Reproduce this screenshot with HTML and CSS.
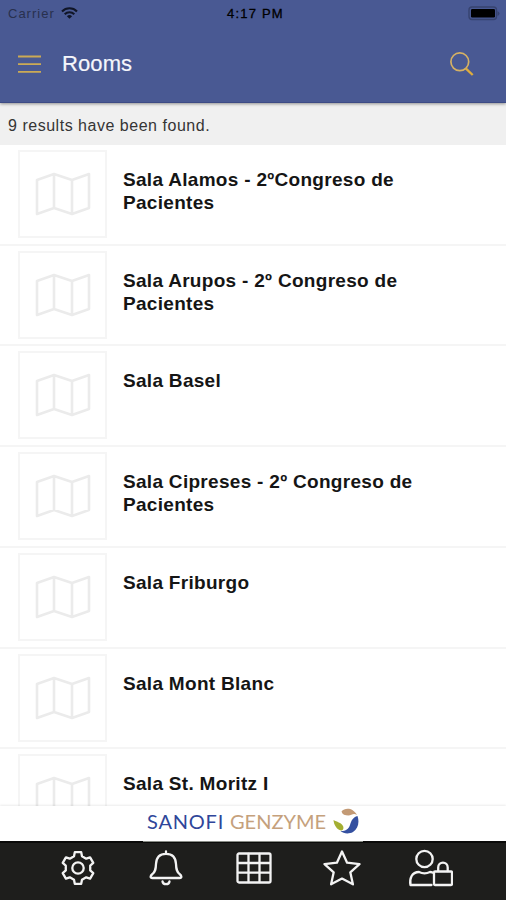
FILE: index.html
```html
<!DOCTYPE html>
<html lang="en">
<head>
<meta charset="utf-8">
<title>Rooms</title>
<link rel="stylesheet" href="styles.css">
</head>
<body>
<svg class="defs" aria-hidden="true">
  <symbol id="map" viewBox="0 0 56 44">
    <path d="M2 8 L19 2 L37 8 L54 2 V36 L37 42 L19 36 L2 42 Z M19 2 V36 M37 8 V42" fill="none" stroke="currentColor" stroke-width="2.6" stroke-linejoin="round"/>
  </symbol>
</svg>
<div class="app">
  <header class="header">
    <div class="status">
      <div class="carrier"><span>Carrier</span>
        <svg width="17" height="12" viewBox="0 0 17 12" fill="none" stroke="#101527" stroke-width="2.1"><path d="M1 4.400a10.600 10.600 0 0 1 15 0M3.700 7.200a6.800 6.800 0 0 1 9.600 0"/><path d="M8.500 11.800 5.900 9.200a3.700 3.700 0 0 1 5.200 0z" fill="#101527" stroke="none"/></svg>
      </div>
      <div class="time">4:17 PM</div>
      <svg class="battery" width="32" height="15" viewBox="0 0 32 15"><rect x="1" y="1" width="27.500" height="12.500" rx="3" fill="none" stroke="#37436f" stroke-width="1.4"/><rect x="3" y="3" width="24" height="8.500" rx="1.2" fill="#000"/><path d="M29.500 5v5q2-1 2-2.500T29.500 5" fill="#37436f"/></svg>
    </div>
    <div class="toolbar">
      <svg class="menu" width="23" height="19" viewBox="0 0 23 19" stroke="#cbaa55" stroke-width="1.9"><path d="M0 1.500H23M0 9.100H23M0 16.900H23"/></svg>
      <h1>Rooms</h1>
      <svg class="search" width="24" height="24" viewBox="0 0 24 24" fill="none" stroke="#d5b164"><circle cx="9.800" cy="9.800" r="8.900" stroke-width="1.7"/><path d="m15.700 16.300 7 6.700" stroke="#dfad3e" stroke-width="2.300"/></svg>
    </div>
  </header>
  <div class="results"><span>9 results have been found.</span></div>
  <main class="list">
    <div class="row"><div class="thumb"><svg><use href="#map"/></svg></div><p>Sala Alamos - 2ºCongreso de<br>Pacientes</p></div>
    <div class="row"><div class="thumb"><svg><use href="#map"/></svg></div><p>Sala Arupos - 2º Congreso de<br>Pacientes</p></div>
    <div class="row"><div class="thumb"><svg><use href="#map"/></svg></div><p>Sala Basel</p></div>
    <div class="row"><div class="thumb"><svg><use href="#map"/></svg></div><p>Sala Cipreses - 2º Congreso de<br>Pacientes</p></div>
    <div class="row"><div class="thumb"><svg><use href="#map"/></svg></div><p>Sala Friburgo</p></div>
    <div class="row"><div class="thumb"><svg><use href="#map"/></svg></div><p>Sala Mont Blanc</p></div>
    <div class="row"><div class="thumb"><svg><use href="#map"/></svg></div><p>Sala St. Moritz I</p></div>
  </main>
  <div class="brand">
    <span class="sanofi">SANOFI</span><span class="genzyme">GENZYME</span>
    <svg width="26" height="26" viewBox="0 0 26 26">
      <path d="M8.500 3.500C12-.8 20-.5 24 7c-3.500-2.300-5.500.2-8.500.5C12 7.500 9.300 6.500 8.500 3.500Z" fill="#c39a75"/>
      <path d="M24.500 8c2.200 6.500.5 13-4.500 16-4.500 2.400-9.500 1.600-12.500-1 5 .2 8-1.500 9.500-6C18.500 12 20 9.500 24.500 8Z" fill="#3450a0"/>
      <path d="M.5 12c3.500 2 7.500 2.500 9.500 6 1 2.200.3 4.500-2 4.500C4 21.800.8 17 .5 12Z" fill="#a4af32"/>
    </svg>
  </div>
  <nav class="tabs">
    <svg width="34" height="34" viewBox="-17 -17 34 34"><path d="M-3.200-15.800H3.200L4-11.800 8.220-9.360 12.080-10.670 15.280-5.130 12.220-2.440V2.440L15.280 5.130 12.080 10.670 8.220 9.360 4 11.800 3.200 15.800H-3.200L-4 11.800-8.220 9.360-12.080 10.670-15.280 5.130-12.220 2.440V-2.440L-15.280-5.130-12.080-10.670-8.220-9.360-4-11.800Z"/><circle r="5.700"/></svg>
    <svg width="34" height="36" viewBox="0 0 34 36"><path d="M17 1.500v2M3.500 28c-2.500 0-2.500-2 0-4 3-2.700 3.300-5 3.500-10C7.300 7.500 11 3.800 17 3.800S26.700 7.500 27 14c.2 5 .5 7.300 3.500 10 2.500 2 2.500 4 0 4ZM13.500 31.500c.5 3.500 6.500 3.500 7 0"/></svg>
    <svg width="36" height="32" viewBox="0 0 36 32"><rect x="1.500" y="1.500" width="33" height="29" rx="1.500"/><path d="M2 11h32M2 20.700h32M12.500 2v28M23.500 2v28"/></svg>
    <svg width="38" height="36" viewBox="0 0 38 36"><path d="m19 1.500 5.100 11.200 12.400 1.400-9.200 8.200 2.600 12L19 28.600 8.100 34.300l2.600-12-9.200-8.200 12.400-1.400Z"/></svg>
    <svg width="46" height="38" viewBox="0 0 46 38"><circle cx="17.500" cy="10" r="8.200"/><path d="M24.500 36H3.500c-1.200-6 1-13 8.500-13 3.500 1.700 7.500 1.700 11 0 1 0 1.800.2 2.500.6"/><rect x="27" y="22.500" width="18" height="13.500" rx="1"/><path d="M31.200 22v-3.500c0-6.500 9.500-6.500 9.500 0V22"/></svg>
  </nav>
</div>
</body>
</html>
```

FILE: styles.css
```css
* { box-sizing: border-box; }
body { margin: 0; background: #fff; font-family: "Liberation Sans", Arial, sans-serif; }
.defs { display: none; }
.app { width: 506px; height: 900px; display: flex; flex-direction: column; overflow: hidden; }
.header { height: 103px; flex: none; background: #495993; border-bottom: 1px solid #3d4b85; box-shadow: 0 1px 3px rgba(0,0,0,.4); position: relative; z-index: 1; }
.status { height: 26px; display: grid; grid-template-columns: 1fr auto 1fr; align-items: center; padding: 0 6px 0 8px; color: #000; }
.carrier { display: flex; align-items: center; gap: 6px; font-size: 13px; letter-spacing: 1px; color: #28304e; }
.time { padding-left: 3px; font-size: 13px; letter-spacing: 1.2px; -webkit-text-stroke: .3px #000; }
.battery { justify-self: end; }
.toolbar { height: 76px; display: flex; align-items: center; padding: 0 32px 0 18px; }
h1 { margin: 0 0 0 21px; font-size: 22px; line-height: 26px; font-weight: 400; color: #f5f6fb; letter-spacing: .1px; -webkit-text-stroke: .2px #f5f6fb; }
.search { margin-left: auto; position: relative; top: -.5px; }
.results { height: 42px; flex: none; display: flex; align-items: center; padding: 4px 8px 0; background: #f0f0f0; font-size: 16px; color: #353535; letter-spacing: .52px; }
.list { flex: 1; min-height: 0; overflow: hidden; }
.row { height: 100.75px; display: flex; padding: 5px 18px 0; border-bottom: 2px solid #f5f5f5; }
.row:first-child { height: 100.5px; }
.thumb { width: 89px; height: 88px; flex: none; border: 2px solid #f5f5f5; display: grid; place-items: center; color: #ebebeb; }
.thumb svg { width: 56px; height: 44px; }
.row p { margin: 18px 0 0 16px; font-size: 19px; line-height: 23px; font-weight: 700; color: #151515; letter-spacing: .3px; white-space: nowrap; }
.brand { height: 35px; flex: none; display: flex; align-items: center; padding: 0 0 5px 147px; background: #fff; box-shadow: 0 -1px 2px rgba(0,0,0,.08); position: relative; font-family: Lato, sans-serif; font-size: 20px; white-space: nowrap; }
.sanofi { width: 83px; color: #2f469a; letter-spacing: .8px; }
.genzyme { width: 103px; color: #c5a17c; letter-spacing: 0; }
.tabs { height: 59px; flex: none; display: grid; grid-template-columns: repeat(5, 88px); place-items: center; padding: 0 32px 5px 34px; background: linear-gradient(#8b8e88, #8b8e88) 143px 0 / 220px 1px no-repeat, linear-gradient(#0b0b0a 2px, #1e1e1c 2px); }
.tabs svg { fill: none; stroke: #f3f3f3; stroke-width: 2.3; stroke-linejoin: round; stroke-linecap: round; }
```
